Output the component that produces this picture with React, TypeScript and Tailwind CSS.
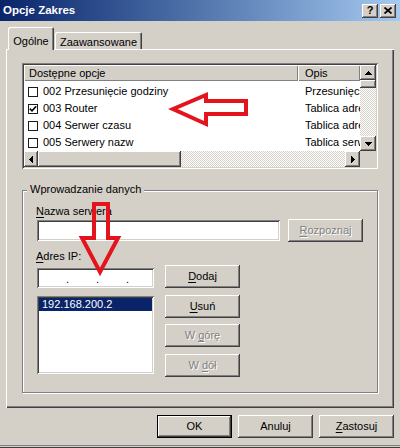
import React from "react";

const raised =
  "shadow-[inset_-1px_-1px_#404040,inset_1px_1px_#ffffff,inset_-2px_-2px_#808080,inset_2px_2px_#d4d0c8]";
const sunken =
  "shadow-[inset_1px_1px_#808080,inset_-1px_-1px_#ffffff,inset_2px_2px_#404040,inset_-2px_-2px_#d4d0c8]";
const track =
  "bg-[image:repeating-conic-gradient(#ffffff_0%_25%,#d4d0c8_0%_50%)] bg-[length:2px_2px]";
const disabledText = "text-[#808080] [text-shadow:1px_1px_0_#ffffff]";

function Btn({
  children,
  disabled,
  def,
  className = "",
}: {
  children: React.ReactNode;
  disabled?: boolean;
  def?: boolean;
  className?: string;
}) {
  return (
    <div
      className={`w-[75px] h-[23px] shrink-0 flex items-center justify-center bg-[#d4d0c8] ${raised} ${
        def ? "border border-black" : ""
      } ${disabled ? disabledText : "text-black"} ${className}`}
    >
      {children}
    </div>
  );
}

const U = ({ c }: { c: string }) => <span className="underline underline-offset-[2px]">{c}</span>;

function Tri({ dir }: { dir: "up" | "down" | "left" | "right" }) {
  const vertical = dir === "up" || dir === "down";
  const d = {
    up: "M3 0h1v1H3zM2 1h3v1H2zM1 2h5v1H1zM0 3h7v1H0z",
    down: "M0 0h7v1H0zM1 1h5v1H1zM2 2h3v1H2zM3 3h1v1H3z",
    left: "M3 0h1v7H3zM2 1h1v5H2zM1 2h1v3H1zM0 3h1v1H0z",
    right: "M0 0h1v7H0zM1 1h1v5H1zM2 2h1v3H2zM3 3h1v1H3z",
  }[dir];
  return (
    <svg width={vertical ? 7 : 4} height={vertical ? 4 : 7} shapeRendering="crispEdges">
      <path d={d} fill="#000" />
    </svg>
  );
}

function CheckBox({ checked }: { checked?: boolean }) {
  return (
    <div className="w-[10px] h-[10px] ml-[4px] mr-[5px] shrink-0 border border-[#1a1a1a] bg-white flex items-center justify-center">
      {checked && (
        <svg width="8" height="8" viewBox="0 0 8 8">
          <path d="M0.8 3.6 L3 5.9 L7.2 1.2" fill="none" stroke="#000" strokeWidth="1.6" />
        </svg>
      )}
    </div>
  );
}

const rows = [
  { name: "002 Przesunięcie godziny", desc: "Przesunięcie godziny", checked: false },
  { name: "003 Router", desc: "Tablica adresów", checked: true },
  { name: "004 Serwer czasu", desc: "Tablica adresów", checked: false },
  { name: "005 Serwery nazw", desc: "Tablica serwerów", checked: false },
];

function ListView() {
  return (
    <div className={`w-[356px] h-[106px] p-[2px] bg-white ${sunken}`}>
      <div className="flex flex-col h-full">
        <div className="flex h-[86px]">
          <div className="w-[336px] flex flex-col overflow-hidden">
            <div className="flex h-[16px] shrink-0 bg-[#d4d0c8]">
              <div className="w-[274px] h-full flex items-center pl-[5px] shadow-[inset_1px_1px_#ffffff,inset_-1px_-1px_#808080]">
                Dostępne opcje
              </div>
              <div className="w-[62px] h-full flex items-center pl-[7px] shadow-[inset_1px_1px_#ffffff,inset_-1px_-1px_#808080]">
                Opis
              </div>
            </div>
            <div className="pt-[2px]">
              {rows.map((r) => (
                <div key={r.name} className="flex h-[17px] items-center">
                  <div className="w-[274px] flex items-center whitespace-nowrap">
                    <CheckBox checked={r.checked} />
                    <span>{r.name}</span>
                  </div>
                  <div className="w-[62px] pl-[7px] overflow-hidden whitespace-nowrap">{r.desc}</div>
                </div>
              ))}
            </div>
          </div>
          <div className="w-[16px] flex flex-col">
            <div className={`h-[15px] bg-[#d4d0c8] flex items-center justify-center ${raised}`}>
              <Tri dir="up" />
            </div>
            <div className={`h-[8px] bg-[#d4d0c8] ${raised}`} />
            <div className={`flex-1 ${track}`} />
            <div className={`h-[15px] bg-[#d4d0c8] flex items-center justify-center ${raised}`}>
              <Tri dir="down" />
            </div>
          </div>
        </div>
        <div className="flex h-[16px]">
          <div className={`w-[14px] bg-[#d4d0c8] flex items-center justify-center ${raised}`}>
            <Tri dir="left" />
          </div>
          <div className={`w-[143px] bg-[#d4d0c8] ${raised}`} />
          <div className={`flex-1 ${track}`} />
          <div className={`w-[15px] bg-[#d4d0c8] flex items-center justify-center ${raised}`}>
            <Tri dir="right" />
          </div>
          <div className="w-[16px] bg-[#d4d0c8]" />
        </div>
      </div>
    </div>
  );
}

function GroupBox() {
  return (
    <div className="relative mt-[21px] w-[356px] h-[203px] border border-[#808080] shadow-[inset_1px_1px_#ffffff,1px_1px_#ffffff] pt-[14px] pl-[14px]">
      <span className="absolute left-[4px] -top-[8px] px-[3px] bg-[#d4d0c8]">Wprowadzanie danych</span>
      <div className="h-[13px] -ml-px">
        <U c="N" />
        azwa serwera
      </div>
      <div className="flex items-center mt-[1px] gap-[8px]">
        <div className={`w-[243px] h-[21px] bg-white ${sunken}`} />
        <Btn disabled>
          <U c="R" />
          ozpoznaj
        </Btn>
      </div>
      <div className="h-[13px] -ml-px mt-[8px]">
        <U c="A" />
        dres IP:
      </div>
      <div className="flex mt-[2px] gap-[11px]">
        <div className="w-[117px] flex flex-col">
          <div className={`mt-[3px] h-[20px] bg-white flex items-center pl-[2px] pt-[3px] ${sunken}`}>
            <span className="w-[27px]" />
            <span className="w-[3px] text-center">.</span>
            <span className="w-[27px]" />
            <span className="w-[3px] text-center">.</span>
            <span className="w-[27px]" />
            <span className="w-[3px] text-center">.</span>
          </div>
          <div className={`mt-[8px] h-[78px] bg-white p-[2px] ${sunken}`}>
            <div className="h-[13px] bg-[#0a246a] text-white pl-[3px] flex items-center">192.168.200.2</div>
          </div>
        </div>
        <div className="flex flex-col">
          <Btn>
            <U c="D" />
            odaj
          </Btn>
          <Btn className="mt-[7px]">
            <U c="U" />
            suń
          </Btn>
          <Btn disabled className="mt-[6px]">
            W&nbsp;
            <U c="g" />
            órę
          </Btn>
          <Btn disabled className="mt-[7px]">
            W&nbsp;
            <U c="d" />
            ół
          </Btn>
        </div>
      </div>
    </div>
  );
}

export default function App() {
  return (
    <div className="relative w-[400px] h-[448px] overflow-hidden bg-[#d4d0c8] flex flex-col font-['Liberation_Sans',Arial,sans-serif] text-[11px] leading-[13px] text-black">
      {/* Title bar */}
      <div className="h-[21px] shrink-0 flex items-center pl-[3px] pr-[4px] bg-linear-to-r from-[#0a246a] to-[#a6caf0]">
        <span className="text-white font-bold text-[11.5px]">Opcje Zakres</span>
        <div className="ml-auto flex gap-[2px]">
          <div className={`w-[16px] h-[14px] bg-[#d4d0c8] flex items-center justify-center font-bold text-[11px] leading-none ${raised}`}>
            ?
          </div>
          <div className={`w-[16px] h-[14px] bg-[#d4d0c8] flex items-center justify-center ${raised}`}>
            <svg width="8" height="7" viewBox="0 0 8 7">
              <path d="M0.5 0.5 L7.5 6.5 M7.5 0.5 L0.5 6.5" stroke="#000" strokeWidth="1.7" />
            </svg>
          </div>
        </div>
      </div>

      <div className="px-[6px] pt-[6px] flex flex-col">
        {/* Tabs */}
        <div className="h-[22px] flex items-end">
          <div className="relative z-10 ml-[2px] -mb-px w-[46px] h-[23px] bg-[#d4d0c8] rounded-t-[2px] pt-[8px] text-center shadow-[inset_1px_1px_#ffffff,inset_-1px_0_#404040,inset_-2px_0_#808080]">
            Ogólne
          </div>
          <div className="w-[87px] h-[17px] ml-px bg-[#d4d0c8] rounded-t-[2px] pt-[4px] text-center shadow-[inset_1px_1px_#ffffff,inset_-1px_0_#404040,inset_-2px_0_#808080]">
            Zaawansowane
          </div>
        </div>
        {/* Panel */}
        <div className="h-[359px] bg-[#d4d0c8] pt-[14px] pl-[16px] shadow-[inset_1px_1px_#ffffff,inset_-1px_-1px_#404040,inset_-2px_-2px_#808080]">
          <ListView />
          <GroupBox />
        </div>
        {/* Bottom buttons */}
        <div className="mt-[7px] flex justify-end gap-[6px]">
          <Btn def>OK</Btn>
          <Btn>Anuluj</Btn>
          <Btn>
            <U c="Z" />
            astosuj
          </Btn>
        </div>
      </div>

      <div className="mt-auto mb-px h-px bg-[#808080]" />
      <div className="h-px bg-[#404040]" />

      {/* Red annotation arrows */}
      <svg className="absolute inset-0 pointer-events-none" width="400" height="448">
        <polygon
          points="173,109 206,95 206,101 246,101 246,114 206,114 206,124"
          fill="none"
          stroke="#e3141d"
          strokeWidth="4"
          strokeLinejoin="miter"
        />
        <polygon
          points="94,204 108,204 108,238 118,238 100,272 82,238 94,238"
          fill="none"
          stroke="#e3141d"
          strokeWidth="4"
          strokeLinejoin="miter"
        />
      </svg>
    </div>
  );
}
